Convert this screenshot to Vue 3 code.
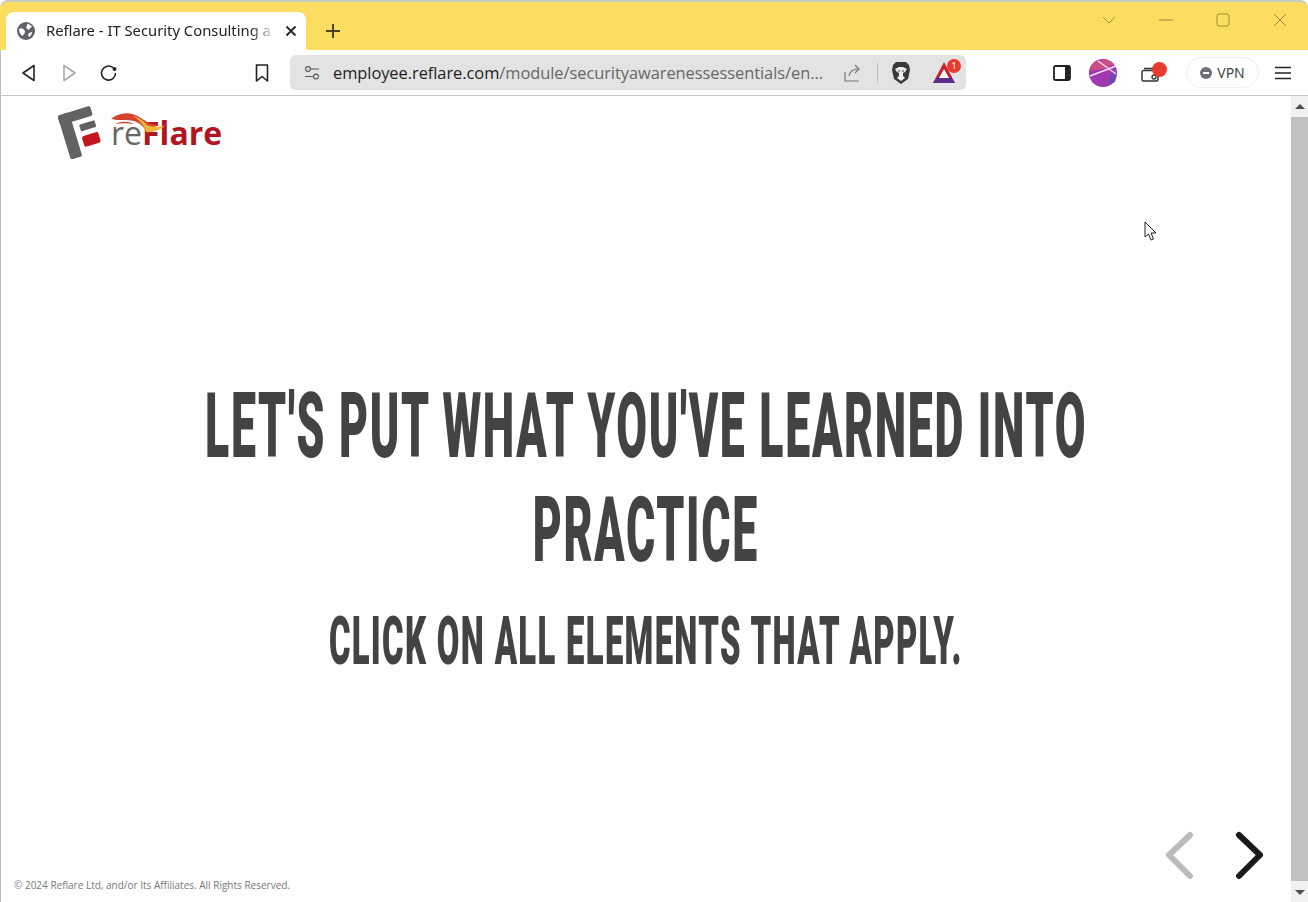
<script setup>
const lines = ["LET'S PUT WHAT YOU'VE LEARNED INTO", 'PRACTICE']
</script>

<template>
  <div class="window">
    <div class="titlebar">
      <div class="tab">
        <svg class="globe" width="20" height="20" viewBox="0 0 20 20">
          <circle cx="10" cy="10" r="9" fill="#5f6368" />
          <path d="M3 8c2-1 3-1 4 0s2 1 2 3-2 2-2 4c-2 0-4-4-4-7zM11 3c2 0 4 1 5 3l-2 1-1 2-2-1-1-2 1-1zM13 12l3-1c0 2-1 4-3 5l-1-2z" fill="#fff" />
        </svg>
        <span class="tab-title">Reflare - IT Security Consulting a</span>
        <svg class="tab-close" width="12" height="12" viewBox="0 0 12 12">
          <path d="M1.5 1.5l9 9M10.5 1.5l-9 9" stroke="#2a2a2a" stroke-width="1.9" />
        </svg>
      </div>
      <svg class="new-tab" width="18" height="18" viewBox="0 0 18 18">
        <path d="M9 2v14M2 9h14" stroke="#4e4320" stroke-width="2" />
      </svg>
      <div class="win-controls">
        <svg width="14" height="8" viewBox="0 0 14 8"><path d="M1 1l6 6 6-6" fill="none" stroke="#a8904a" stroke-width="1" /></svg>
        <svg width="14" height="14" viewBox="0 0 14 14"><path d="M0 7h14" stroke="#a08a40" stroke-width="1" /></svg>
        <svg width="14" height="14" viewBox="0 0 14 14"><rect x="1" y="1" width="12" height="12" rx="2" fill="none" stroke="#a08a40" stroke-width="1" /></svg>
        <svg width="14" height="14" viewBox="0 0 14 14"><path d="M1 1l12 12M13 1L1 13" stroke="#a08a40" stroke-width="1" /></svg>
      </div>
    </div>

    <div class="toolbar">
      <button class="tool">
        <svg width="18" height="18" viewBox="0 0 18 18"><path d="M14 1.500v15L3 9z" fill="none" stroke="#222" stroke-width="1.6" stroke-linejoin="round" /></svg>
      </button>
      <button class="tool">
        <svg width="18" height="18" viewBox="0 0 18 18"><path d="M4 1.500v15L15 9z" fill="none" stroke="#aaa" stroke-width="1.6" stroke-linejoin="round" /></svg>
      </button>
      <button class="tool">
        <svg width="20" height="20" viewBox="0 0 20 20"><path d="M16.500 10a7 7 0 1 1-2.500-5.300" fill="none" stroke="#222" stroke-width="1.600" /><circle cx="15.500" cy="6" r="2" fill="#222" /></svg>
      </button>
      <button class="tool bookmark">
        <svg width="18" height="20" viewBox="0 0 18 20"><path d="M3.500 2h11v16L9 13.500 3.500 18z" fill="none" stroke="#222" stroke-width="1.600" stroke-linejoin="round" /></svg>
      </button>
      <div class="urlbar">
        <svg class="tune" width="16" height="16" viewBox="0 0 16 16">
          <circle cx="4" cy="4" r="2.400" fill="none" stroke="#555" stroke-width="1.100" />
          <path d="M6.500 4H15M1 11.500h8.500" stroke="#555" stroke-width="1.100" />
          <circle cx="12" cy="11.500" r="2.400" fill="none" stroke="#555" stroke-width="1.100" />
        </svg>
        <span class="url"><b>employee.reflare.com</b>/module/securityawarenessessentials/en...</span>
        <svg class="share" width="20" height="20" viewBox="0 0 20 20">
          <path d="M2 9v9h14M6 13c1-5 5-7 9-7M12 2l4 4-4 4" fill="none" stroke="#777" stroke-width="1.200" />
        </svg>
        <span class="sep"></span>
        <svg class="lion" width="20" height="24" viewBox="0 0 20 24">
          <path d="M5 1h10l3 3 1 5-2 9-7 5-7-5-2-9 1-5z" fill="#3a3a3a" />
          <path d="M4 8l4-2h4l4 2-2 3-2 1v3l2 2-4 3-4-3 2-2v-3l-2-1z" fill="#eee" />
          <path d="M7 10h2M11 10h2" stroke="#3a3a3a" stroke-width="1.200" />
        </svg>
        <div class="rewards">
          <svg width="24" height="24" viewBox="0 0 24 24">
            <path d="M11 1l11 21H0z" fill="#c8202c" />
            <path d="M0 22l4-6h14l4 6z" fill="#5b2f8c" />
            <path d="M11 8l5 9H6z" fill="#fff" />
          </svg>
          <span class="rewards-badge">1</span>
        </div>
      </div>
      <div class="tools-right">
        <svg class="ic-side" width="18" height="16" viewBox="0 0 18 16">
          <rect x="1" y="1" width="16" height="14" rx="1.500" fill="#fff" stroke="#222" stroke-width="1.800" />
          <rect x="12" y="1" width="5" height="14" fill="#222" />
        </svg>
        <svg class="ic-avatar" width="28" height="28" viewBox="0 0 28 28">
          <circle cx="14" cy="14" r="14" fill="#a137b3" />
          <path d="M5 3l12-3 8 5-10 5-15 2z" fill="#cf4c86" />
          <path d="M20 16l8-3-2 10-6 3z" fill="#6c48b0" />
          <path d="M1 17L27 7M9 2l18 13" stroke="#f4e6ef" stroke-width="1.400" />
        </svg>
        <div class="wallet">
          <svg width="18" height="16" viewBox="0 0 18 16">
            <path d="M3 2.500h12M1 6a1.500 1.500 0 0 1 1.500-1.500h13A1.500 1.500 0 0 1 17 6v7.500a1.500 1.500 0 0 1-1.500 1.500h-13A1.500 1.500 0 0 1 1 13.500z" fill="none" stroke="#333" stroke-width="1.500" />
            <circle cx="13" cy="11" r="2" fill="none" stroke="#333" stroke-width="1.300" />
          </svg>
          <span class="wallet-dot"></span>
        </div>
        <div class="vpn">
          <span class="vpn-dot"></span>
          <span>VPN</span>
        </div>
        <svg class="ic-menu" width="18" height="14" viewBox="0 0 18 14">
          <path d="M1 1.500h16M1 7h16M1 12.500h16" stroke="#222" stroke-width="1.600" />
        </svg>
      </div>
    </div>

    <div class="viewport">
      <main class="page">
        <div class="logo">
          <svg width="46" height="54" viewBox="0 0 46 54">
            <g transform="rotate(-17 20 27)" fill="#626262">
              <rect x="7" y="6" width="34" height="10" rx="2" />
              <rect x="7" y="6" width="12" height="46" rx="2" />
              <rect x="25" y="21" width="16" height="7" rx="1" />
              <rect x="24" y="33" width="17" height="11" rx="2" fill="#c4161f" />
            </g>
          </svg>
          <div class="wordmark">
            <svg class="flame" width="58" height="24" viewBox="0 0 58 24">
              <path d="M0 7C8 0 20-1 30 6c6 4 10 7 18 7l-13 6C31 11 23 8 14 8 8 8 4 8 0 7z" fill="#d5432c" />
              <path d="M4 12c6-3 13-3 19 0-6-1-13-1-19 0z" fill="#d5432c" />
              <path d="M22 4c7 2 11 5 14 9 5 2 11 2 18 1-6 4-13 7-19 6C34 14 28 8 22 4z" fill="#ecb63c" />
            </svg>
            <span class="re">re</span><span class="flare">Flare</span>
          </div>
        </div>

        <h1 class="headline">
          <span v-for="line in lines" :key="line" class="headline-line"><span>{{ line }}</span></span>
        </h1>
        <p class="subline"><span>CLICK ON ALL ELEMENTS THAT APPLY.</span></p>

        <footer class="footer">
          <span class="copyright">© 2024 Reflare Ltd, and/or Its Affiliates. All Rights Reserved.</span>
          <div class="pager">
            <svg width="32" height="50" viewBox="0 0 32 50"><path d="M26 5L5 25l21 21" fill="none" stroke="#bbb" stroke-width="6" stroke-linecap="round" stroke-linejoin="round" /></svg>
            <svg width="32" height="50" viewBox="0 0 32 50"><path d="M5 5l21 20L5 46" fill="none" stroke="#1a1a1a" stroke-width="6" stroke-linecap="round" stroke-linejoin="round" /></svg>
          </div>
        </footer>
      </main>

      <div class="scrollbar">
        <span class="arrow-up"></span>
        <div class="thumb"></div>
        <span class="arrow-down"></span>
      </div>

      <svg class="cursor" width="14" height="20" viewBox="0 0 14 20">
        <path d="M1 1v15l3.500-3 2.500 6 2.500-1-2.500-6H12z" fill="#fff" stroke="#222" stroke-width="1" />
      </svg>
    </div>
  </div>
</template>

<style scoped>
.window {
  width: 1308px;
  height: 902px;
  display: flex;
  flex-direction: column;
  overflow: hidden;
  font-family: "Noto Sans", "Open Sans", sans-serif;
  background: #fff;
}

.titlebar {
  height: 50px;
  box-sizing: border-box;
  flex: none;
  display: flex;
  align-items: flex-end;
  padding-left: 6px;
  background: #fbde60;
  border-top: 2px solid #c9c9c4;
  border-radius: 8px 8px 0 0;
}

.tab {
  width: 300px;
  height: 38px;
  box-sizing: border-box;
  display: flex;
  align-items: center;
  padding: 0 9px 0 10px;
  background: #fff;
  border-radius: 8px 8px 0 0;
}

.tab-title {
  flex: 1;
  margin-left: 10px;
  padding-bottom: 2px;
  font-size: 14.8px;
  color: #222;
  white-space: nowrap;
  -webkit-mask-image: linear-gradient(90deg, #000 88%, transparent 100%);
  mask-image: linear-gradient(90deg, #000 88%, transparent 100%);
}

.tab-close {
  margin-left: 8px;
}

.new-tab {
  margin: 0 0 10px 18px;
}

.win-controls {
  margin-left: auto;
  align-self: flex-start;
  padding-top: 11px;
  padding-right: 21px;
  display: flex;
  gap: 43px;
  align-items: center;
}

.toolbar {
  height: 46px;
  box-sizing: border-box;
  flex: none;
  display: flex;
  align-items: center;
  padding-left: 8px;
  border-bottom: 1px solid #c8c8c8;
  border-left: 1px solid #bbb;
}

.tool {
  width: 40px;
  height: 36px;
  padding: 0;
  border: 0;
  background: none;
  display: flex;
  align-items: center;
  justify-content: center;
}

.bookmark {
  margin-left: 113px;
}

.urlbar {
  width: 676px;
  height: 35px;
  margin-left: 8px;
  display: flex;
  align-items: center;
  padding-left: 14px;
  box-sizing: border-box;
  background: #e3e3e3;
  border-radius: 6px;
}

.url {
  width: 490px;
  margin-left: 13px;
  font-family: "Open Sans", sans-serif;
  font-size: 16.4px;
  letter-spacing: -0.04px;
  color: #666;
  white-space: nowrap;
}

.url b {
  font-weight: 400;
  color: #222;
}

.share {
  margin-left: 20px;
}

.sep {
  width: 1px;
  height: 20px;
  margin-left: 14px;
  background: #bdbdbd;
}

.lion {
  margin-left: 13px;
}

.rewards {
  position: relative;
  width: 24px;
  height: 24px;
  margin-left: 22px;
}

.rewards-badge {
  position: absolute;
  top: -2px;
  right: -4px;
  width: 14px;
  height: 14px;
  border-radius: 50%;
  background: #ea3a2d;
  color: #fff;
  font-size: 9px;
  line-height: 14px;
  text-align: center;
}

.tools-right {
  flex: 1;
  display: flex;
  align-items: center;
  padding-left: 87px;
}

.ic-avatar {
  margin-left: 18px;
}

.wallet {
  position: relative;
  width: 18px;
  height: 16px;
  margin-left: 24px;
}

.wallet-dot {
  position: absolute;
  top: -3px;
  right: -8px;
  width: 15px;
  height: 15px;
  border-radius: 50%;
  background: #ea3a2d;
}

.vpn {
  width: 73px;
  height: 31px;
  margin-left: 27px;
  box-sizing: border-box;
  display: flex;
  align-items: center;
  justify-content: center;
  gap: 5px;
  border: 1px solid #eee;
  border-radius: 16px;
  font-size: 14px;
  color: #444;
}

.vpn-dot {
  position: relative;
  width: 12px;
  height: 12px;
  border-radius: 50%;
  background: #6d7078;
}

.vpn-dot::after {
  content: "";
  position: absolute;
  left: 3px;
  top: 5px;
  width: 6px;
  height: 2px;
  background: #fff;
}

.ic-menu {
  margin-left: 15px;
}

.viewport {
  flex: 1;
  min-height: 0;
  position: relative;
  display: flex;
  border-left: 1px solid #bbb;
}

.page {
  flex: 1;
  min-width: 0;
  display: flex;
  flex-direction: column;
  overflow: hidden;
  font-family: Roboto, "Liberation Sans", sans-serif;
}

.logo {
  flex: none;
  display: flex;
  align-items: flex-start;
  height: 54px;
  padding: 9px 0 0 55px;
  gap: 9px;
}

.wordmark {
  position: relative;
  margin-top: 8px;
  font-family: "Open Sans", sans-serif;
  font-size: 32px;
  line-height: 40px;
  white-space: nowrap;
}

.re {
  color: #666;
}

.flare {
  color: #b01622;
  font-weight: 700;
}

.flame {
  position: absolute;
  left: 0;
  top: -1px;
}

.headline {
  margin: 215px 0 0;
  font-size: 91px;
  font-weight: 900;
  letter-spacing: 3.5px;
  color: #434343;
}

.headline-line {
  display: flex;
  justify-content: center;
  height: 104px;
  line-height: 104px;
  white-space: nowrap;
}

.headline-line span,
.subline span {
  flex: none;
  display: block;
  transform: scaleX(0.49);
}

.subline {
  margin: 19px 0 0;
  display: flex;
  justify-content: center;
  height: 80px;
  line-height: 80px;
  font-size: 67px;
  font-weight: 900;
  letter-spacing: 2.7px;
  color: #434343;
  white-space: nowrap;
}

.footer {
  margin-top: auto;
  display: flex;
  justify-content: space-between;
  align-items: flex-end;
  padding: 0 25px 11px 13px;
}

.copyright {
  font-family: "Open Sans", sans-serif;
  font-size: 10px;
  color: #777;
  line-height: 12px;
}

.pager {
  display: flex;
  gap: 38px;
  margin-bottom: 11px;
}

.scrollbar {
  flex: none;
  width: 17px;
  display: flex;
  flex-direction: column;
  align-items: center;
  background: #f1f1f1;
}

.thumb {
  width: 100%;
  flex: 1;
  margin: 8px 0 9px;
  background: #c1c1c1;
}

.arrow-up,
.arrow-down {
  width: 0;
  height: 0;
  flex: none;
  border-left: 5px solid transparent;
  border-right: 5px solid transparent;
}

.arrow-up {
  margin-top: 8px;
  border-bottom: 5px solid #505050;
}

.arrow-down {
  margin-bottom: 7px;
  border-top: 5px solid #505050;
}

.cursor {
  position: absolute;
  left: 1143px;
  top: 125px;
}
</style>

<style>
html, body {
  margin: 0;
  overflow: hidden;
}
</style>
